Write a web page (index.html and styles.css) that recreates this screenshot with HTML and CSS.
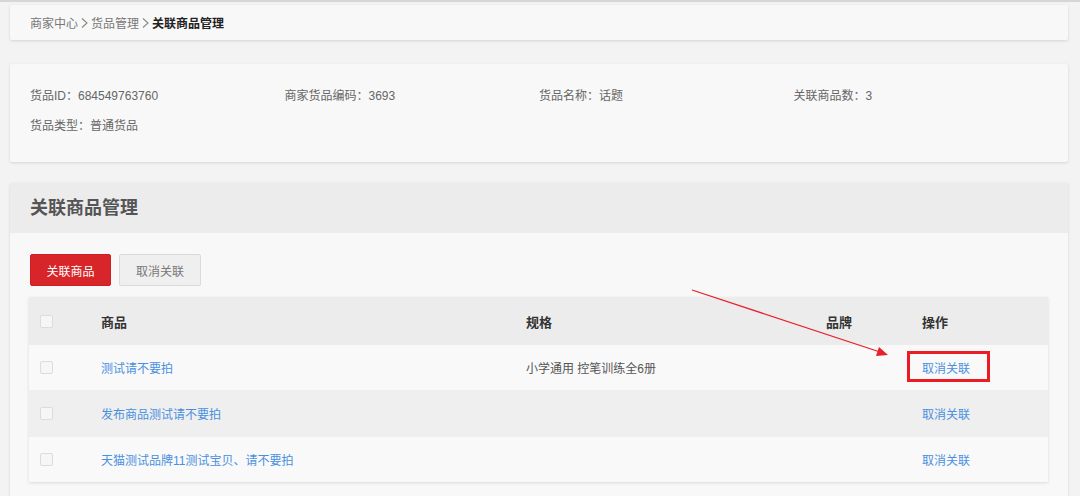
FILE: index.html
```html
<!DOCTYPE html>
<html lang="zh-CN">
<head>
<meta charset="utf-8">
<title>关联商品管理</title>
<link rel="stylesheet" href="styles.css">
</head>
<body>
<div class="page">
  <div class="card crumbs">
    <span class="crumb">商家中心</span>
    <svg class="sep" width="9" height="12" viewBox="0 0 9 12"><path d="M2 1.5 L7 6 L2 10.5" fill="none" stroke="#888" stroke-width="1.1"/></svg>
    <span class="crumb">货品管理</span>
    <svg class="sep" width="9" height="12" viewBox="0 0 9 12"><path d="M2 1.5 L7 6 L2 10.5" fill="none" stroke="#888" stroke-width="1.1"/></svg>
    <span class="crumb current">关联商品管理</span>
  </div>

  <div class="card info">
    <div class="info-grid">
      <div>货品ID：684549763760</div>
      <div>商家货品编码：3693</div>
      <div>货品名称：话题</div>
      <div>关联商品数：3</div>
      <div>货品类型：普通货品</div>
    </div>
  </div>

  <div class="card section">
    <div class="section-head">关联商品管理</div>
    <div class="section-body">
      <div class="toolbar">
        <button class="btn btn-primary">关联商品</button>
        <button class="btn btn-default">取消关联</button>
      </div>
      <div class="table">
        <div class="tr thead">
          <div class="td"><span class="check"></span></div>
          <div class="td">商品</div>
          <div class="td">规格</div>
          <div class="td">品牌</div>
          <div class="td">操作</div>
        </div>
        <div class="tr odd">
          <div class="td"><span class="check"></span></div>
          <div class="td"><a class="link">测试请不要拍</a></div>
          <div class="td spec">小学通用 控笔训练全6册</div>
          <div class="td"></div>
          <div class="td op"><a class="link">取消关联</a><span class="highlight"></span></div>
        </div>
        <div class="tr even">
          <div class="td"><span class="check"></span></div>
          <div class="td"><a class="link">发布商品测试请不要拍</a></div>
          <div class="td spec"></div>
          <div class="td"></div>
          <div class="td op"><a class="link">取消关联</a></div>
        </div>
        <div class="tr odd">
          <div class="td"><span class="check"></span></div>
          <div class="td"><a class="link">天猫测试品牌11测试宝贝、请不要拍</a></div>
          <div class="td spec"></div>
          <div class="td"></div>
          <div class="td op"><a class="link">取消关联</a></div>
        </div>
      </div>
    </div>
  </div>
</div>
<svg class="arrow" width="1080" height="496" viewBox="0 0 1080 496">
  <line x1="692" y1="290" x2="880" y2="352" stroke="#e8202a" stroke-width="1.3"/>
  <polygon points="888,355 876,356 879,347" fill="#e8202a"/>
</svg>
</body>
</html>
```

FILE: styles.css
```css
html, body {
  margin: 0;
  padding: 0;
}
body {
  background: #f3f3f3;
  border-top: 2px solid #d6d6d6;
  font-family: "Liberation Sans", "Noto Sans CJK SC", sans-serif;
  font-size: 12px;
  color: #666;
  height: 494px;
  overflow: hidden;
  position: relative;
}
.page {
  padding: 3px 12px 0 10px;
  display: flex;
  flex-direction: column;
}
.card {
  background: #f8f8f8;
  box-shadow: 0 1px 3px rgba(0, 0, 0, 0.13);
  border-radius: 2px;
}
.crumbs {
  height: 35px;
  display: flex;
  align-items: center;
  padding-left: 20px;
  color: #777;
}
.sep {
  margin: 0 2px;
}
.crumb.current {
  color: #222;
  font-weight: bold;
}
.info {
  margin-top: 24px;
  padding: 22px 20px 26px 20px;
}
.info-grid {
  display: grid;
  grid-template-columns: repeat(4, 1fr);
  row-gap: 10px;
  line-height: 20px;
  color: #666;
}
.section {
  margin-top: 21px;
}
.section-head {
  height: 50px;
  line-height: 50px;
  background: #ececec;
  padding-left: 20px;
  font-size: 18px;
  font-weight: bold;
  color: #555;
}
.section-body {
  padding: 21px 20px 20px 19px;
}
.toolbar {
  display: flex;
  gap: 8px;
  padding-left: 1px;
}
.btn {
  height: 32px;
  width: 81px;
  border-radius: 2px;
  font-family: "Liberation Sans", "Noto Sans CJK SC", sans-serif;
  font-size: 12px;
  padding: 0;
  cursor: pointer;
}
.btn-primary {
  background: #d7252a;
  border: 1px solid #cc2024;
  color: #fff;
}
.btn-default {
  background: #efefef;
  border: 1px solid #dadada;
  color: #777;
  width: 82px;
}
.table {
  margin-top: 11px;
  box-shadow: 0 1px 3px rgba(0, 0, 0, 0.12);
}
.tr {
  display: grid;
  grid-template-columns: 72px 425px 300px 96px 1fr;
  align-items: center;
  height: 45px;
}
.thead {
  height: 48px;
  background: #ececec;
  font-size: 13px;
  font-weight: bold;
  color: #333;
}
.odd {
  background: #f9f9f9;
}
.even {
  background: #efefef;
  height: 47px;
}
.td {
  position: relative;
}
.td:first-child {
  padding-left: 11px;
  display: flex;
  align-items: center;
}
.check {
  display: inline-block;
  width: 11px;
  height: 11px;
  border: 1px solid #dcdcdc;
  border-radius: 2px;
  background: #f6f6f6;
}
.link {
  color: #4a90e0;
  text-decoration: none;
  cursor: pointer;
}
.spec {
  color: #555;
}
.highlight {
  position: absolute;
  left: -15px;
  top: -8px;
  width: 77px;
  height: 25px;
  border: 3px solid #ec1c24;
}
.arrow {
  position: absolute;
  left: 0;
  top: -2px;
  pointer-events: none;
}
```
